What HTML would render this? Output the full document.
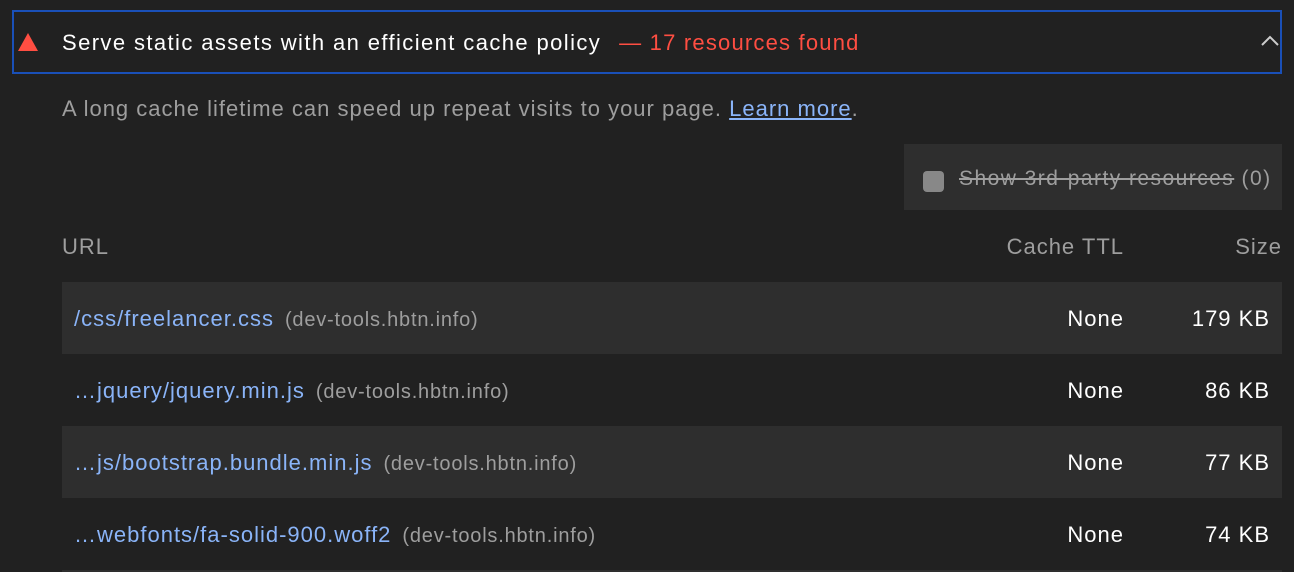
<!DOCTYPE html>
<html><head><style>
html,body{margin:0;height:572px;overflow:hidden}
body{background:#212121;width:1294px;font-family:"Liberation Sans",sans-serif;position:relative;letter-spacing:1px}
.a{position:absolute;white-space:nowrap}
.hdr{position:absolute;left:12px;top:10px;width:1266px;height:60px;border:2px solid #1a50b8}
.row{position:absolute;left:62px;width:1220px;height:72px}
.u{position:absolute;left:12px;top:1px;line-height:72px;font-size:22px;color:#8ab4f8}
.u span{color:#9e9e9e;font-size:20px;margin-left:11px;letter-spacing:0.8px}
.n{position:absolute;right:158px;top:1px;line-height:72px;font-size:22px;color:#fff}
.s{position:absolute;right:12px;top:1px;line-height:72px;font-size:22px;color:#fff}
</style></head><body>
<div class="hdr"></div>
<svg class="a" style="left:17px;top:32px" width="22" height="20"><polygon points="11,1 21,19 1,19" fill="#ff4e42"/></svg>
<div class="a" style="left:62px;top:30px;font-size:22px;color:#fff;letter-spacing:1.4px">Serve static assets with an efficient cache policy<span style="color:#ff4e42;margin-left:18px;letter-spacing:1.2px">— 17 resources found</span></div>
<svg class="a" style="left:1260px;top:34px" width="20" height="14"><path d="M2 11 L10 3 L18 11" stroke="#ccc" stroke-width="2" fill="none"/></svg>
<div class="a" style="left:62px;top:96px;font-size:22px;color:#9e9e9e">A long cache lifetime can speed up repeat visits to your page. <span style="color:#8ab4f8;text-decoration:underline">Learn more</span>.</div>
<div class="a" style="left:904px;top:144px;width:378px;height:66px;background:#2e2e2e"></div>
<div class="a" style="left:923px;top:171px;width:21px;height:21px;border-radius:4px;background:#888"></div>
<div class="a" style="left:959px;top:167px;font-size:21px;color:#9e9e9e;letter-spacing:1.45px"><span style="text-decoration:line-through">Show 3rd-party resources</span> (0)</div>
<div class="a" style="left:62px;top:234px;font-size:22px;color:#9e9e9e">URL</div>
<div class="a" style="right:170px;top:234px;font-size:22px;color:#9e9e9e">Cache TTL</div>
<div class="a" style="right:12px;top:234px;font-size:22px;color:#9e9e9e">Size</div>
<div class="row" style="top:282px;background:#2e2e2e"><div class="u">/css/freelancer.css<span>(dev-tools.hbtn.info)</span></div><div class="n">None</div><div class="s">179 KB</div></div>
<div class="row" style="top:354px"><div class="u">…jquery/jquery.min.js<span>(dev-tools.hbtn.info)</span></div><div class="n">None</div><div class="s">86 KB</div></div>
<div class="row" style="top:426px;background:#2e2e2e"><div class="u">…js/bootstrap.bundle.min.js<span>(dev-tools.hbtn.info)</span></div><div class="n">None</div><div class="s">77 KB</div></div>
<div class="row" style="top:498px"><div class="u">…webfonts/fa-solid-900.woff2<span>(dev-tools.hbtn.info)</span></div><div class="n">None</div><div class="s">74 KB</div></div>
<div class="row" style="top:570px;height:2px;background:#2e2e2e"></div>
</body></html>
